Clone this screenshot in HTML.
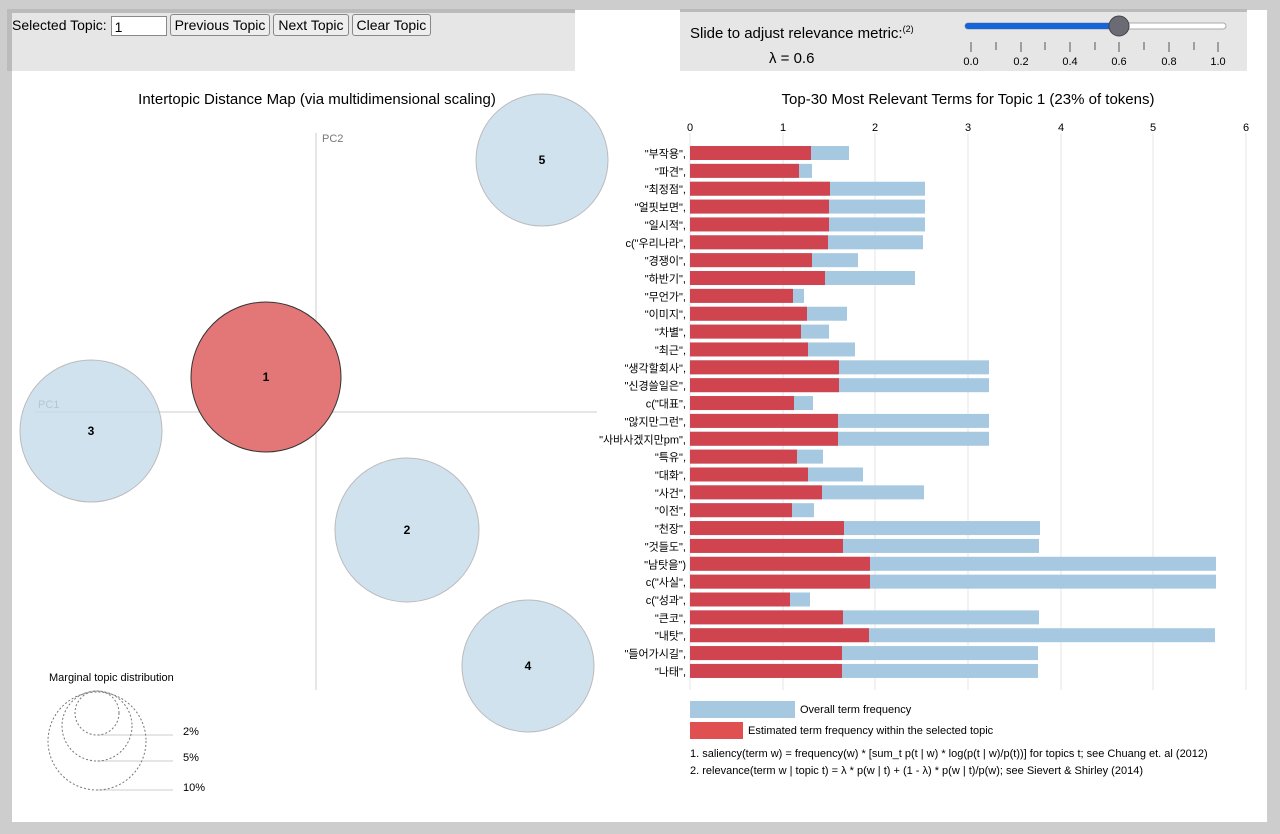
<!DOCTYPE html>
<html><head><meta charset="utf-8"><style>
body{margin:0;width:1280px;height:834px;background:#cdcdcd;overflow:hidden;font-family:"Liberation Sans","Noto Sans CJK KR",sans-serif}
.panel{position:absolute;left:12px;top:10px;width:1255px;height:812px;background:#fff}
.ctl{position:absolute;background:#e6e6e6;font-size:14px}
.btn{display:inline-block;border:1px solid #888;border-radius:3px;background:#eee;padding:2px 4px;font-size:14px;margin-left:3px}
</style></head><body>
<div class="panel"></div>
<div class="ctl" style="left:7px;top:9px;width:568px;height:62px;border-top:4px solid #bbb;border-left:5px solid #bbb;box-sizing:border-box"></div>
<div style="position:absolute;left:12px;top:14px;font-size:14px;">Selected Topic: <span style="display:inline-block;width:56px;height:20px;border:1px solid #888;background:#fff;vertical-align:middle;font-size:14px;line-height:20px;padding-left:3px;box-sizing:border-box">1</span><span class="btn">Previous Topic</span><span class="btn">Next Topic</span><span class="btn">Clear Topic</span></div>
<div class="ctl" style="left:680px;top:9px;width:567px;height:62px;border-top:3px solid #bbb;box-sizing:border-box"></div>
<div style="position:absolute;left:690px;top:24px;font-size:15px">Slide to adjust relevance metric:<sup style="font-size:9px">(2)</sup></div>
<div style="position:absolute;left:769px;top:50px;font-size:15px">λ = 0.6</div>
<svg width="1280" height="834" style="position:absolute;left:0;top:0" font-family="Liberation Sans, Noto Sans CJK KR, sans-serif">
<rect x="965" y="23" width="261" height="6" rx="3" fill="#fff" stroke="#aaa"/>
<rect x="965" y="23" width="154" height="6" rx="3" fill="#1565d8"/>
<circle cx="1119" cy="26" r="10" fill="#6b6b75" stroke="#444"/>
<g stroke="#555" stroke-width="1">
<line x1="971" y1="42" x2="971" y2="52"/><line x1="996" y1="42" x2="996" y2="50"/><line x1="1021" y1="42" x2="1021" y2="52"/><line x1="1045" y1="42" x2="1045" y2="50"/><line x1="1070" y1="42" x2="1070" y2="52"/><line x1="1095" y1="42" x2="1095" y2="50"/><line x1="1119" y1="42" x2="1119" y2="52"/><line x1="1144" y1="42" x2="1144" y2="50"/><line x1="1169" y1="42" x2="1169" y2="52"/><line x1="1194" y1="42" x2="1194" y2="50"/><line x1="1218" y1="42" x2="1218" y2="52"/></g>
<g font-size="11" text-anchor="middle"><text x="971" y="65">0.0</text><text x="1021" y="65">0.2</text><text x="1070" y="65">0.4</text><text x="1119" y="65">0.6</text><text x="1169" y="65">0.8</text><text x="1218" y="65">1.0</text></g>
<text x="317" y="104" font-size="15" text-anchor="middle">Intertopic Distance Map (via multidimensional scaling)</text>
<text x="968" y="104" font-size="15" text-anchor="middle">Top-30 Most Relevant Terms for Topic 1 (23% of tokens)</text>
<line x1="316" y1="133" x2="316" y2="690" stroke="#ccc"/>
<line x1="35" y1="412" x2="597" y2="412" stroke="#ccc"/>
<text x="322" y="142" font-size="11" fill="#777">PC2</text>
<text x="38" y="408" font-size="11" fill="#777">PC1</text>
<g fill="#c6dbeb" fill-opacity="0.8" stroke="#bbb">
<circle cx="542" cy="160" r="66"/><circle cx="91" cy="431" r="71"/><circle cx="407" cy="530" r="72"/><circle cx="528" cy="666" r="66"/></g>
<circle cx="266" cy="377" r="75" fill="#e37777" stroke="#333"/>
<g font-size="12" font-weight="bold" text-anchor="middle"><text x="542" y="164">5</text><text x="266" y="381">1</text><text x="91" y="435">3</text><text x="407" y="534">2</text><text x="528" y="670">4</text></g>
<text x="49" y="681" font-size="11">Marginal topic distribution</text>
<g stroke="#ccc"><line x1="97" y1="735" x2="173" y2="735"/><line x1="97" y1="761" x2="173" y2="761"/><line x1="97" y1="790" x2="173" y2="790"/></g>
<g fill="none" stroke="#777" stroke-dasharray="2,2"><circle cx="97" cy="713" r="22"/><circle cx="97" cy="726" r="35"/><circle cx="97" cy="741" r="49"/></g>
<g font-size="11"><text x="183" y="735">2%</text><text x="183" y="761">5%</text><text x="183" y="791">10%</text></g>
<g stroke="#e5e5e5"><line x1="690" y1="133" x2="690" y2="690"/><line x1="783" y1="133" x2="783" y2="690"/><line x1="875" y1="133" x2="875" y2="690"/><line x1="968" y1="133" x2="968" y2="690"/><line x1="1061" y1="133" x2="1061" y2="690"/><line x1="1153" y1="133" x2="1153" y2="690"/><line x1="1246" y1="133" x2="1246" y2="690"/></g>
<g font-size="11" text-anchor="middle"><text x="690" y="131">0</text><text x="783" y="131">1</text><text x="875" y="131">2</text><text x="968" y="131">3</text><text x="1061" y="131">4</text><text x="1153" y="131">5</text><text x="1246" y="131">6</text></g>
<g id="bars"></g>
<rect x="690" y="701" width="105" height="17" fill="#a6c8e0"/>
<rect x="690" y="722" width="53" height="17" fill="#e05050"/>
<g font-size="11"><text x="800" y="713">Overall term frequency</text><text x="748" y="734">Estimated term frequency within the selected topic</text>
<text x="690" y="757">1. saliency(term w) = frequency(w) * [sum_t p(t | w) * log(p(t | w)/p(t))] for topics t; see Chuang et. al (2012)</text>
<text x="690" y="774">2. relevance(term w | topic t) = λ * p(w | t) + (1 - λ) * p(w | t)/p(w); see Sievert &amp; Shirley (2014)</text></g>
</svg>
<script>
var d=[["\"부작용\",",811,849],["\"파견\",",799,812],["\"최정점\",",830,925],["\"얼핏보면\",",829,925],["\"일시적\",",829,925],["c(\"우리나라\",",828,923],["\"경쟁이\",",812,858],["\"하반기\",",825,915],["\"무언가\",",793,804],["\"이미지\",",807,847],["\"차별\",",801,829],["\"최근\",",808,855],["\"생각할회사\",",839,989],["\"신경쓸일은\",",839,989],["c(\"대표\",",794,813],["\"않지만그런\",",838,989],["\"사바사겠지만pm\",",838,989],["\"특유\",",797,823],["\"대화\",",808,863],["\"사건\",",822,924],["\"이전\",",792,814],["\"천장\",",844,1040],["\"것들도\",",843,1039],["\"남탓을\")",870,1216],["c(\"사실\",",870,1216],["c(\"성과\",",790,810],["\"큰코\",",843,1039],["\"내탓\",",869,1215],["\"들어가시길\",",842,1038],["\"나태\",",842,1038]];
var s="";d.forEach(function(r,i){var y=146+i*17.86;s+='<rect x="690" y="'+y+'" width="'+(r[2]-690)+'" height="14" fill="#a6c8e0"/><rect x="690" y="'+y+'" width="'+(r[1]-690)+'" height="14" fill="#d0444f"/><text x="686" y="'+(y+11.5)+'" font-size="11" text-anchor="end">'+r[0]+'</text>';});
document.getElementById("bars").innerHTML=s;
</script>
</body></html>
